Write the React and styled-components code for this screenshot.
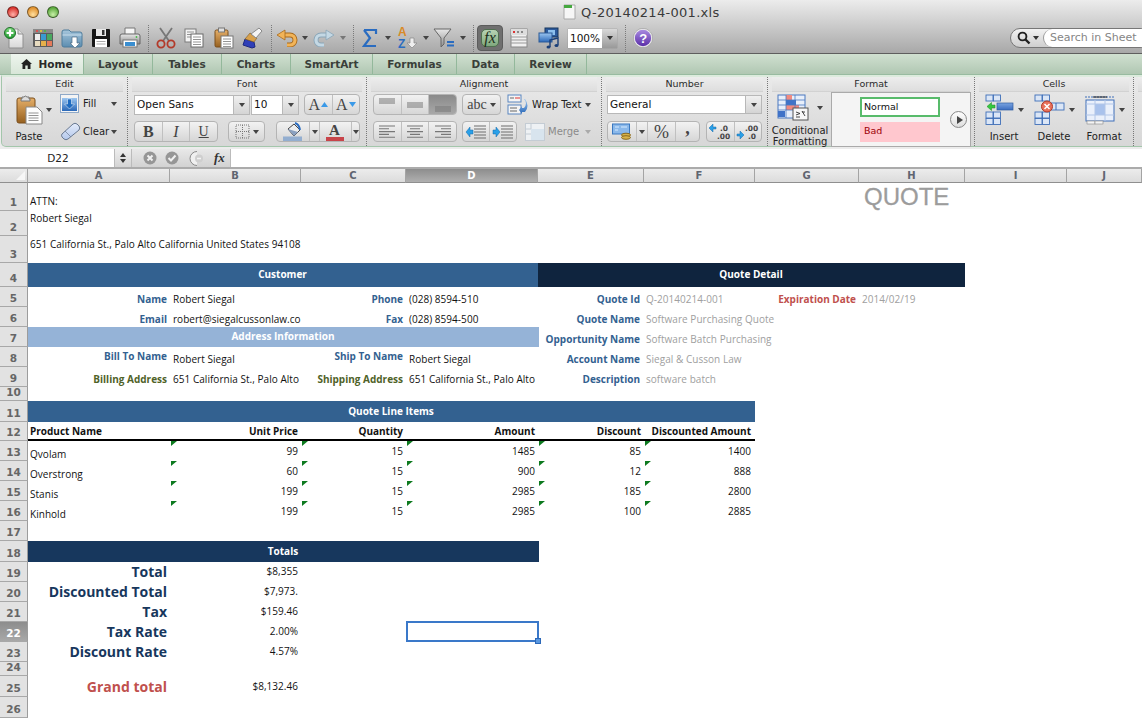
import React from "react";
import styled, { createGlobalStyle, css } from "styled-components";

const Global = createGlobalStyle`
  html, body { margin: 0; padding: 0; background: #fff; }
  body { font-family: "DejaVu Sans", sans-serif; }
`;
const ui = `"DejaVu Sans", "Liberation Sans", sans-serif`;
const sheet = `"Open Sans", "Noto Sans", sans-serif`;

const Window = styled.div`width:1142px;height:718px;overflow:hidden;display:flex;flex-direction:column;background:#fff;`;
const Chrome = styled.div`background:linear-gradient(#ececec,#a8a8a8);border-bottom:1px solid #5e5e5e;height:53px;display:flex;flex-direction:column;flex:none;`;
const TitleBar = styled.div`height:24px;display:flex;align-items:center;padding-left:3px;flex:none;`;
const Light = styled.span`width:12px;height:12px;border-radius:50%;margin:0 4px;border:.5px solid rgba(0,0,0,.45);box-sizing:border-box;
  background:radial-gradient(circle at 50% 75%,${p=>p.$a} 0%,${p=>p.$b} 75%);`;
const Title = styled.div`margin-left:500px;display:flex;align-items:center;gap:5px;font:13px ${ui};letter-spacing:.3px;color:#3a3a3a;`;
const Toolbar = styled.div`display:flex;align-items:center;height:29px;padding-bottom:1px;box-sizing:border-box;`;
const Slot = styled.div`width:${p=>p.$w}px;flex:none;display:flex;justify-content:center;align-items:center;box-sizing:border-box;
  ${p=>p.$end&&"justify-content:flex-end;padding-right:3px;"}`;
const Sep = styled.div`width:8px;height:27px;flex:none;display:flex;justify-content:center;&::after{content:"";border-left:1px dotted #7a7a7a;}`;
const Caret = styled.span`width:0;height:0;border-left:${p=>p.$s||3}px solid transparent;border-right:${p=>p.$s||3}px solid transparent;border-top:${p=>(p.$s||3)+1}px solid ${p=>p.$c||"#444"};display:inline-block;flex:none;`;
const FxBtn = styled.div`width:26px;height:26px;box-sizing:border-box;border-radius:4px;background:#6f6f6f;padding:3px;border:1px solid #5c5c5c;flex:none;display:flex;`;
const FxIn = styled.div`flex:1;border-radius:5px;background:linear-gradient(#b7d3b4,#7fa87d);border:1px solid #4f6f4f;font:italic 16px "Liberation Serif",serif;color:#1c2f1c;display:flex;align-items:center;justify-content:center;`;
const ZoomBox = styled.div`width:49px;height:19px;margin-left:4px;display:flex;flex:none;background:#fff;box-shadow:0 0 1px #777;`;
const ZoomText = styled.div`flex:1;font:10.5px/19px ${ui};color:#111;padding-left:2px;`;
const ZoomDrop = styled.div`width:15px;background:linear-gradient(#d8d8d8,#999);display:flex;align-items:center;justify-content:center;`;
const SearchPill = styled.div`margin-left:auto;width:140px;margin-right:-8px;height:20px;flex:none;box-sizing:border-box;border:1px solid #777;border-radius:10px;background:linear-gradient(#f2f2f2,#cfcfcf);display:flex;align-items:center;padding-left:6px;gap:2px;`;
const SearchField = styled.div`margin-left:2px;flex:1;height:18px;background:#fff;border-radius:9px 0 0 9px;border-left:1px solid #999;font:11px/18px ${ui};color:#858585;padding-left:6px;white-space:nowrap;`;

const Tabs = styled.div`height:20px;flex:none;display:flex;padding-left:11px;background:linear-gradient(#d0e0d0,#b0c7b2);border-bottom:1px solid #98bba0;box-sizing:content-box;`;
const Tab = styled.div`width:${p=>p.$w}px;flex:none;box-sizing:border-box;display:flex;align-items:center;justify-content:center;gap:6px;
  font:bold 10.5px ${ui};color:#3a3f3a;border-right:1px solid #93b89b;
  ${p=>p.$active&&css`background:linear-gradient(#eef5ee,#d8e6d8);color:#2a2a2a;`}`;

const RibbonWrap = styled.div`height:74px;flex:none;background:#ececec;`;
const Ribbon = styled.div`height:72px;display:flex;box-sizing:border-box;background:linear-gradient(#eaeaea,#d7d7d7);border:1px solid #a3c6ab;border-top:2px solid #dcebdd;border-radius:0 0 5px 5px;margin:0 0 0 1px;width:1160px;`;
const Group = styled.div`width:${p=>p.$w}px;flex:none;box-sizing:border-box;display:flex;flex-direction:column;${p=>p.$last?"":"border-right:1px dotted #777;"}`;
const GroupHead = styled.div`height:14px;flex:none;margin:0 4px;border-bottom:1px solid #d2d2d2;background:linear-gradient(#ededed,#dedede);font:9.5px/14px ${ui};color:#2b2b2b;text-align:center;`;
const GroupBody = styled.div`flex:1;display:flex;padding:2px 0 0 ${p=>p.$pl||0}px;gap:${p=>p.$gap||0}px;min-height:0;`;
const Stack = styled.div`display:flex;flex-direction:column;gap:${p=>p.$gap??6}px;margin-top:${p=>p.$mt||0}px;`;
const Row = styled.div`display:flex;align-items:center;height:${p=>p.$h||21}px;gap:${p=>p.$gap||0}px;`;
const Seg = styled.div`display:flex;height:${p=>p.$h||21}px;width:${p=>p.$w}px;flex:none;margin-left:${p=>p.$ml||0}px;box-sizing:border-box;border:1px solid #b4b4b4;border-radius:4px;overflow:hidden;background:linear-gradient(#f2f2f2,#d6d6d6);`;
const SegBtn = styled.div`flex:${p=>p.$w?`0 0 ${p.$w}px`:"1"};display:flex;align-items:center;justify-content:center;border-right:1px solid #c0c0c0;gap:3px;
  &:last-child{border-right:0}
  ${p=>p.$on&&css`background:linear-gradient(#8a8a8a,#a8a8a8);`}`;
const Glyph = styled.span`font:${p=>p.$i?"italic ":""}${p=>p.$b?"bold ":""}${p=>p.$s||15}px/${p=>p.$lh||"1"} "Liberation Serif",serif;color:#444;${p=>p.$u&&"text-decoration:underline;"}${p=>p.$lift&&`transform:translateY(-${p.$lift}px);`}`;
const Combo = styled.div`display:flex;height:${p=>p.$h||20}px;width:${p=>p.$w}px;margin-left:${p=>p.$ml||0}px;flex:none;box-sizing:border-box;border:1px solid #b8b8b8;background:#fff;`;
const ComboText = styled.div`flex:1;font:10.5px/16px ${ui};color:#111;padding-left:2px;`;
const ComboDrop = styled.div`width:15px;background:linear-gradient(#f0f0f0,#d4d4d4);border-left:1px solid #b8b8b8;display:flex;align-items:center;justify-content:center;`;
const Label = styled.div`font:${p=>p.$s||10}px ${ui};color:${p=>p.$c||"#222"};white-space:nowrap;margin-right:${p=>p.$mr||0}px;${p=>p.$center&&"text-align:center;line-height:11px;"}`;
const PasteCol = styled.div`width:52px;margin-left:6px;display:flex;flex-direction:column;align-items:center;gap:6px;`;
const IconCaret = styled.div`display:flex;align-items:center;gap:3px;`;
const EditRow = styled.div`display:flex;align-items:center;width:57px;height:21px;`;
const EditIcon = styled.div`width:23px;display:flex;flex:none;`;
const Push = styled.div`margin-left:auto;display:flex;`;
const Gallery = styled.div`width:140px;height:55px;margin:-2px 0 0 6px;flex:none;box-sizing:border-box;border:1px solid #aaa;background:#f4f4f4;display:flex;align-items:center;padding-left:28px;gap:10px;`;
const StyleBox = styled.div`width:80px;height:20px;box-sizing:border-box;font:9.5px/16px ${ui};padding-left:2px;
  ${p=>p.$kind==="normal"?css`background:#fff;border:2px solid #58bb6b;color:#111;`:css`background:#ffc7ce;color:#9c0006;line-height:18px;padding-left:4px;`}`;
const Round = styled.div`width:15px;height:15px;border-radius:50%;border:1px solid #888;background:linear-gradient(#fff,#ddd);display:flex;align-items:center;justify-content:center;`;
const RightTri = styled.span`width:0;height:0;border-top:4px solid transparent;border-bottom:4px solid transparent;border-left:6px solid #444;margin-left:2px;`;
const CellCol = styled.div`width:50px;flex:none;display:flex;flex-direction:column;align-items:center;gap:${p=>p.$gap??6}px;`;

const FormulaBar = styled.div`height:18px;flex:none;display:flex;border-bottom:2px solid #ababab;background:#fff;`;
const NameBox = styled.div`width:114px;font:10.5px/18px ${ui};color:#222;text-align:center;box-sizing:border-box;padding-left:2px;`;
const Stepper = styled.div`width:18px;box-sizing:border-box;background:linear-gradient(#eee,#d4d4d4);border-left:1px solid #bbb;border-right:1px solid #bbb;display:flex;flex-direction:column;align-items:center;justify-content:center;gap:2px;`;
const Up = styled.span`width:0;height:0;border-left:3px solid transparent;border-right:3px solid transparent;border-bottom:4px solid #333;`;
const FxArea = styled.div`width:99px;box-sizing:border-box;background:linear-gradient(#e8e8e8,#d2d2d2);border-right:1px solid #bbb;display:flex;align-items:center;padding-left:11px;gap:8px;`;
const PlusWrap = styled.div`margin-left:2px;display:flex;`;
const FxMark = styled.span`font:italic bold 13px "Liberation Serif",serif;color:#333;margin-left:-1px;`;

const Grid = styled.div`display:grid;margin-top:0;flex:none;
  grid-template-columns:28px 142px 131px 105px 132px 106px 111px 104px 106px 102px 75px;
  grid-template-rows:14px 28px 25px 27px 24px 20px 20px 20px 20px 20px 14px 21px 19px 20px 20px 20px 20px 20px 21px 20px 20px 20px 20px 20px 14px 21px 21px;`;
const ColHead = styled.div`grid-row:1;grid-column:${p=>p.$c};box-sizing:border-box;border-right:1px solid #a4a4a4;border-bottom:1px solid #8f8f8f;
  background:${p=>p.$on?"linear-gradient(#8d8d8d,#b0b0b0)":"linear-gradient(#ececec,#dcdcdc)"};
  font:bold 10px/13px ${ui};color:${p=>p.$on?"#fff":"#5f6570"};text-align:center;position:relative;`;
const Corner = styled.span`position:absolute;right:2px;bottom:2px;width:0;height:0;border-left:9px solid transparent;border-bottom:9px solid #f7f7f7;`;
const RowHead = styled.div`grid-column:1;grid-row:${p=>p.$r+1};box-sizing:border-box;border-right:1px solid #9c9c9c;border-bottom:1px solid #a8a8a8;
  background:${p=>p.$on?"linear-gradient(#8d8d8d,#a8a8a8)":"#e2e2e2"};color:${p=>p.$on?"#fff":"#666"};
  font:bold 10.5px/14px ${ui};display:flex;align-items:flex-end;justify-content:center;padding-bottom:1px;`;
const Cell = styled.div`grid-column:${p=>p.$c+2} / span ${p=>p.$span||1};grid-row:${p=>p.$r+1};box-sizing:border-box;min-width:0;white-space:nowrap;
  padding-top:${p=>p.$pt||0}px;padding-left:${p=>p.$pl??2}px;padding-right:${p=>p.$pr??3}px;
  font:${p=>p.$b?700:400} ${p=>p.$s||10}px/14px ${sheet};color:${p=>p.$color||"#111"};
  background:${p=>p.$bg||"transparent"};text-align:${p=>p.$t||"left"};
  ${p=>!p.$b&&"letter-spacing:.035px;"}
  ${p=>p.$ext&&"margin-right:-1px;"}
  ${p=>p.$rule&&"border-bottom:2px solid #000;"}`;
const Quote = styled.div`grid-column:9;grid-row:2;font:400 24px/28px "Liberation Sans",sans-serif;color:#9c9c9c;padding-left:5px;-webkit-text-stroke:.3px #9c9c9c;`;
const Flag = styled.i`grid-column:${p=>p.$c+2};grid-row:${p=>p.$r+1};width:0;height:0;border-top:5px solid #0d7a1f;border-right:6px solid transparent;margin-left:1px;pointer-events:none;`;
const Selection = styled.div`grid-column:5;grid-row:23;box-sizing:border-box;border:2px solid #3a78c9;position:relative;margin:-1px -1px 0 0;`;
const Handle = styled.span`position:absolute;right:-4px;bottom:-4px;width:6px;height:6px;background:#5a98e0;border:1px solid #2c68b8;box-sizing:border-box;`;
const HiddenDefs = styled.svg`display:block;width:0;height:0;flex:none;`;

const Defs = () => (
  <HiddenDefs aria-hidden="true"><defs>
    {[["gBlue","#9cc6f0","#2a68b8"],["gGreen","#7fdc7f","#1f9a2f"],["gBrown","#e6b06a","#96601f"],["gPaper","#ffffff","#d8d8d8"],["gGrey","#e8e8e8","#8e8e8e"],
      ["gPurple","#a98be0","#5a2ea8"],["gFolder","#a6c6dc","#5c8db0"],["gOrange","#f6c878","#d98a28"],["gPale","#cfe0ea","#8fb0c4"],["gDark","#666","#222"],["gCell","#e4ecfa","#b4c8ec"],["gTile","#7aa4e0","#3a6cc0"]].map(([id,a,b])=>(
      <linearGradient id={id} key={id} x1="0" y1="0" x2="0" y2="1"><stop offset="0" stopColor={a}/><stop offset="1" stopColor={b}/></linearGradient>
    ))}
  </defs></HiddenDefs>
);
const S = ({w=24,h=24,children}) => <svg width={w} height={h} viewBox={`0 0 ${w} ${h}`} style={{display:"block",flex:"none"}}>{children}</svg>;
const DocLines = ({x,y,n=4,w=7,c="#888"}) => <>{Array.from({length:n},(_,i)=><line key={i} x1={x} x2={x+w} y1={y+i*2.5} y2={y+i*2.5} stroke={c} strokeWidth=".9"/>)}</>;

const INew = () => <S><path d="M7 3h9l5 5v14H7z" fill="url(#gPaper)" stroke="#8f8f8f"/><path d="M16 3v5h5" fill="#ddd" stroke="#8f8f8f"/><circle cx="8" cy="7" r="5.5" fill="url(#gGreen)" stroke="#1e6d28"/><path d="M8 3.6v6.8M4.6 7h6.8" stroke="#fff" strokeWidth="2.2"/></S>;
const IGallery = () => <S w={22} h={20}><rect x="1" y="1" width="20" height="18" fill="#5c5c5c" rx="1"/><rect x="1" y="1" width="20" height="4" fill="#8a8a8a"/><circle cx="5" cy="3" r="1.1" fill="#e44"/><circle cx="9" cy="3" r="1.1" fill="#ec3"/><circle cx="13" cy="3" r="1.1" fill="#4b4"/><rect x="3" y="6" width="5" height="6" fill="#eee"/><rect x="9" y="6" width="5" height="6" fill="#3a9ad0"/><rect x="15" y="6" width="5" height="6" fill="#49a860"/><rect x="3" y="13" width="5" height="5" fill="#e8dcc0"/><rect x="9" y="13" width="5" height="5" fill="#e6b04a"/><rect x="15" y="13" width="5" height="5" fill="#e47a5a"/></S>;
const IOpen = () => <S w={22} h={22}><path d="M1 5q0-2 2-2h5l2 2h9q2 0 2 2v11q0 2-2 2H3q-2 0-2-2z" fill="url(#gFolder)" stroke="#4e7c9c"/><path d="M1.5 8h19" stroke="#c8dcea"/><path d="M11 10h5v6h3l-5 5-5-5h2z" fill="#fff" stroke="#4e6c84" strokeWidth=".7"/></S>;
const ISave = () => <S w={20} h={20}><path d="M1 2q0-1 1-1h16q1 0 1 1v16q0 1-1 1H2q-1 0-1-1z" fill="#161616"/><rect x="5" y="1" width="10" height="7" fill="#e8e8e8"/><rect x="11" y="2" width="2.5" height="5" fill="#333"/><rect x="4" y="11" width="12" height="8" fill="#fff"/><path d="M5.5 13.5h9M5.5 16h9" stroke="#aaa"/></S>;
const IPrint = () => <S w={22} h={22}><path d="M6 1h10v7H6z" fill="#f6f6f6" stroke="#777"/><path d="M3 7h16q2 0 2 2v8H1V9q0-2 2-2z" fill="url(#gGrey)" stroke="#666"/><rect x="4" y="13" width="14" height="7" fill="#fff" stroke="#777"/><rect x="6" y="15" width="10" height="4" fill="#3a8ed0"/><circle cx="17.5" cy="10" r=".9" fill="#4b4"/></S>;
const ICut = () => <S w={20} h={22}><path d="M4 1l9 13M16 1L7 14" stroke="#777" strokeWidth="1.8" fill="none"/><circle cx="5" cy="17" r="3.6" fill="none" stroke="#b33a2a" strokeWidth="1.8"/><circle cx="15" cy="17" r="3.6" fill="none" stroke="#b33a2a" strokeWidth="1.8"/></S>;
const ICopy = () => <S w={20} h={20}><rect x="1" y="1" width="11" height="13" fill="#f4f4f4" stroke="#7a7a7a"/><DocLines x={3} y={4} n={3}/><rect x="7" y="6" width="12" height="13" fill="#fff" stroke="#6a6a6a"/><DocLines x={9} y={9} n={4} w={8}/></S>;
const IPaste = ({big}) => big ? <S w={27} h={31}><rect x="1" y="4" width="18" height="25" rx="2" fill="url(#gBrown)" stroke="#7a4e1c"/><path d="M6 5V3h2q1-2 3 0h2v2h1v2H5V5z" fill="#ddd" stroke="#777"/><path d="M10 13h11l5 5v12H10z" fill="#fdfdfd" stroke="#888"/><DocLines x={12.5} y={19} n={4} w={10}/></S>
  : <S w={20} h={22}><rect x="1" y="3" width="13" height="17" rx="1.5" fill="url(#gBrown)" stroke="#7a4e1c"/><rect x="4.5" y="1" width="6" height="4" fill="#e0e0e0" stroke="#777"/><rect x="7" y="9" width="12" height="12" fill="#fff" stroke="#777"/><DocLines x={9} y={12} n={4} w={8}/></S>;
const IBrush = () => <S w={22} h={22}><path d="M3 12l9 3 1 5-3 1-9-3z" fill="#2f3fb8" stroke="#1d2980"/><path d="M3 12l5-6 7 5-3 4z" fill="#d8a04a" stroke="#7a5a2a" strokeWidth=".6"/><path d="M9 7l8-6 3 3-6 7z" fill="#f4f4f4" stroke="#888"/></S>;
const CurvedArrow = ({outer,inner,head}) => <S w={22} h={18}>
  <path d="M8 6h6a5 5 0 0 1 0 10h-3" fill="none" stroke={outer} strokeWidth="5"/>
  <path d="M8 6h6a5 5 0 0 1 0 10h-3" fill="none" stroke={inner} strokeWidth="3.2"/>
  <path d="M1 6l8-5v10z" fill={head} stroke={outer} strokeWidth=".8"/>
</S>;
const IUndo = () => <CurvedArrow outer="#a86a1c" inner="#f2b458" head="#f2b458"/>;
const Mirror = styled.div`transform:scaleX(-1);display:flex;`;
const IRedo = () => <Mirror><CurvedArrow outer="#8aa6b8" inner="#c4d8e4" head="#c4d8e4"/></Mirror>;
const ISigma = () => <S w={16} h={20}><path d="M2 2h12v4M14 18H2l6-8-6-8" fill="none" stroke="#2a6cc0" strokeWidth="2.2"/></S>;
const SvgText = styled.text`font:bold ${p=>p.$s}px "Liberation Sans",sans-serif;`;
const ISort = () => <S w={21} h={24}><SvgText x="1" y="10" $s={12} fill="#d98a28">A</SvgText><SvgText x="1" y="22" $s={12} fill="#2a6cc0">Z</SvgText><path d="M12 12h4v5h3l-5 5-5-5h3z" transform="translate(1 0)" fill="#eee" stroke="#888" strokeWidth=".7"/></S>;
const IFilter = () => <S w={22} h={22}><path d="M1 2h17l-7 9v6l-3 3v-9z" fill="url(#gGrey)" stroke="#666"/><path d="M14 15h7M14 18.5h7" stroke="#2a6cc0" strokeWidth="1.8"/></S>;
const ITable = () => <S w={18} h={20}><rect x="1" y="1" width="16" height="18" fill="#f0f0f0" stroke="#888"/><rect x="1" y="1" width="16" height="6" fill="#ddd"/><rect x="3" y="3" width="2" height="2" fill="#d33"/><rect x="7" y="3" width="2" height="2" fill="#888"/><rect x="11" y="3" width="2" height="2" fill="#888"/><path d="M1 9h16M1 12h16M1 15h16" stroke="#999"/></S>;
const IMedia = () => <S w={22} h={22}><rect x="7" y="1" width="13" height="9" fill="#2c5a9c" stroke="#16365e"/><rect x="10" y="3" width="7" height="5" fill="#8cc0ee"/><rect x="1" y="6" width="13" height="9" fill="url(#gBlue)" stroke="#2a5a98"/><path d="M12 20v-7l8-2v7" fill="none" stroke="#1a3f78" strokeWidth="1.4"/><ellipse cx="10.5" cy="20" rx="2" ry="1.6" fill="#1a3f78"/><ellipse cx="18.5" cy="18.5" rx="2" ry="1.6" fill="#1a3f78"/></S>;
const IHelp = () => <S w={20} h={20}><circle cx="10" cy="10" r="9.6" fill="#eee" stroke="#999" strokeWidth=".6"/><circle cx="10" cy="10" r="8.2" fill="url(#gPurple)"/><SvgText x="6.3" y="14.6" $s={13} fill="#fff">?</SvgText></S>;
const ISearch = () => <S w={14} h={14}><circle cx="5.5" cy="5.5" r="3.9" fill="none" stroke="#222" strokeWidth="1.9"/><path d="M8.5 8.5l4 4" stroke="#222" strokeWidth="2.4"/></S>;
const IFileTitle = () => <S w={13} h={16}><path d="M1 1h11v14H1z" fill="#f6f6f6" stroke="#aaa"/><rect x="1" y="1" width="8" height="3" fill="#45a83f"/></S>;
const IFill = () => <S w={19} h={19}><rect x=".5" y=".5" width="18" height="18" fill="#f4f4f4" stroke="#8fa9c8"/><rect x="2" y="4" width="15" height="13" fill="url(#gBlue)"/><path d="M7.5 5h4v5h3l-5 5-5-5h3z" fill="#1e6bc0" stroke="#fff" strokeWidth=".5"/></S>;
const IEraser = () => <S w={21} h={19}><path d="M2 12L13 2q2-1.500 4 0l2 2q1.500 2 0 4L8 17q-2 1.500-4 0l-2-2q-1-2 0-3z" fill="url(#gCell)" stroke="#6a7a92"/><path d="M5 9l6 6" stroke="#6a7a92" strokeWidth=".7"/></S>;
const ABtn = ({c,down}) => <><Glyph $s={16}>A</Glyph><svg width="7" height="5" viewBox="0 0 7 5" style={{display:"block",marginLeft:-2}}><path d={down?"M0 0h7L3.500 5z":"M0 5h7L3.500 0z"} fill={c}/></svg></>;
const IBorders = () => <S w={15} h={15}><rect x="1" y="1" width="13" height="13" fill="none" stroke="#777" strokeDasharray="1 1"/><path d="M7.500 1v13M1 7.500h13" stroke="#777" strokeDasharray="1 1"/></S>;
const IBucket = () => <S w={22} h={19}><path d="M6 7l6-5 6 6-6 6z" fill="#eee" stroke="#444"/><path d="M6 7l6 7 4-4z" fill="#8aa0c0"/><path d="M13 1q4 1 5 7" stroke="#2a6cc0" strokeWidth="2" fill="none"/><rect x="1" y="14.500" width="19" height="4.500" fill="#93aed0"/></S>;
const IFontA = () => <S w={19} h={19}><SvgText x="3" y="13" $s={15} fill="#444" style={{fontFamily:"Liberation Serif"}}>A</SvgText><rect x="0" y="15" width="18" height="4" fill="#c8444a"/></S>;
const Lines = ({rows}) => <S w={18} h={14}>{rows.map(([a,b,y],i)=><line key={i} x1={a} x2={b} y1={y} y2={y} stroke="#777" strokeWidth="1.1"/>)}</S>;
const IWrap = () => <S w={22} h={22}><rect x="1" y="1" width="13" height="7" fill="#f4f4f4" stroke="#5a86c0"/><path d="M3 4h4" stroke="#666"/><path d="M8 4h5" stroke="#d33"/><rect x="1" y="11" width="13" height="9" fill="#f4f4f4" stroke="#5a86c0"/><path d="M3 14h7M3 17h7" stroke="#666"/><path d="M17 5q4 4 0 9h-2v-2l-3 4 3 4v-2h3q5-6 0-13z" fill="url(#gBlue)"/></S>;
const IMerge = () => <S w={20} h={18}><rect x=".5" y=".5" width="19" height="17" fill="#eef1f4" stroke="#c4ccd4"/><rect x="6" y="6" width="13" height="11" fill="#d8e4ee"/><path d="M6 .5v5.500H.5M.5 11H6" stroke="#c4ccd4" fill="none"/></S>;
const IIndent = ({right}) => <S w={22} h={14}><path d="M9 1h12M9 4h12M9 7h12M9 10h12M9 13h12" stroke="#6f6f6f" strokeWidth="1.1"/>{right?<path d="M1 5h3V2l4 5-4 5V9H1z" fill="#2aa0e8" stroke="#1468a8" strokeWidth=".5"/>:<path d="M8 5H5V2L1 7l4 5V9h3z" fill="#2aa0e8" stroke="#1468a8" strokeWidth=".5"/>}</S>;
const IMoney = () => <S w={20} h={18}><rect x=".5" y="1" width="17" height="10" fill="#8ab8ea" stroke="#3a78c0"/><path d="M3 4h4M9 4h6M3 7h3" stroke="#d8ecff"/><ellipse cx="14" cy="12" rx="4.500" ry="1.800" fill="#d8b24a" stroke="#8a6a1e"/><ellipse cx="14" cy="14.500" rx="4.500" ry="1.800" fill="#d8b24a" stroke="#8a6a1e"/></S>;
const DecText = styled.text`font:bold 7.5px ${ui};fill:#444;`;
const IDec = ({more}) => <S w={24} h={16}>{more?<><DecText x="9" y="7">.00</DecText><DecText x="12" y="15">.0</DecText><path d="M1 10h3V7l4 4-4 4v-3H1z" fill="#2aa0e8" stroke="#1468a8" strokeWidth=".5"/></>:<><DecText x="12" y="7">.0</DecText><DecText x="9" y="15">.00</DecText><path d="M8 3H5V0L1 4l4 4V5h3z" fill="#2aa0e8" stroke="#1468a8" strokeWidth=".5"/></>}</S>;
const ICond = () => <S w={37} h={27}><rect x="1" y="1" width="27" height="23" fill="#e8effa" stroke="#4a78c0"/>
  <rect x="9" y="1" width="6" height="5" fill="#f08a80"/><rect x="9" y="6" width="10" height="5" fill="#3f72c8"/><rect x="9" y="11" width="13" height="5" fill="#f08a80"/><rect x="1" y="17" width="7" height="6" fill="#3f72c8"/><path d="M1 6h27M1 11h27M1 16h27M9 1v23M18 1v23" stroke="#4a78c0" strokeWidth=".8"/>
  <rect x="16" y="14" width="15" height="12" fill="#f8f8f8" stroke="#555"/><path d="M19 18l4 1.500-4 1.500M19 23h4M25 17l3 5M28 18h-3" stroke="#333" fill="none" strokeWidth=".9"/></S>;
const Blocks = ({n,y,x}) => <>{Array.from({length:n},(_,i)=><rect key={i} x={x+i*7.500} y={y} width="7" height="6" fill="#dbe6f6" stroke="#3f6fb8" strokeWidth=".9"/>)}</>;
const IInsert = () => <S w={30} h={31}><Blocks n={2} x={1} y={1}/><Blocks n={2} x={1} y={18}/><Blocks n={2} x={1} y={24.500}/><rect x="12" y="9" width="16" height="7" fill="url(#gTile)" stroke="#2f5ca0" strokeWidth=".7"/><path d="M10 11H6.500V8.500L2 12.500l4.500 4V14H10z" fill="#35c83f" stroke="#1d8a25" strokeWidth=".5"/></S>;
const IDelete = () => <S w={32} h={31}><Blocks n={2} x={1} y={1}/><Blocks n={2} x={1} y={18}/><Blocks n={2} x={1} y={24.500}/><rect x="14" y="9" width="16" height="7" fill="#dbe6f6" stroke="#3f6fb8" strokeWidth=".9"/><path d="M22 9v7" stroke="#3f6fb8"/><circle cx="13" cy="12.500" r="5.500" fill="#e8705a" stroke="#b03a2a"/><path d="M10.500 10l5 5M15.500 10l-5 5" stroke="#fff" strokeWidth="1.500"/></S>;
const IFormatCells = () => <S w={32} h={31}><path d="M1 3h30" stroke="#3f6fb8" strokeDasharray="2 1"/><path d="M9 3h14" stroke="#222"/><rect x="2" y="6" width="28" height="21" fill="#eaf0fb" stroke="#3f6fb8"/><rect x="11" y="10" width="10" height="11" fill="#a9c2ec"/><path d="M2 10h28M2 21h28M11 6v21M21 6v21" stroke="#b2c6e8"/><rect x="3" y="27" width="8" height="3" fill="#f4f4f4" stroke="#888" strokeWidth=".6"/><rect x="11" y="27" width="8" height="3" fill="#f4f4f4" stroke="#888" strokeWidth=".6"/></S>;
const IBadgeX = () => <S w={14} h={14}><circle cx="7" cy="7" r="6.500" fill="#969696"/><path d="M4.500 4.500l5 5M9.500 4.500l-5 5" stroke="#f0f0f0" strokeWidth="2"/></S>;
const IBadgeOk = () => <S w={14} h={14}><circle cx="7" cy="7" r="6.500" fill="#969696"/><path d="M3.500 7l2.500 2.500L10.500 4.500" stroke="#f0f0f0" strokeWidth="2" fill="none"/></S>;
const IBadgePlus = () => <S w={18} h={15}><path d="M8 .5A7 7 0 0 0 8 14.500" fill="#f0f0f0" stroke="#888"/><circle cx="10" cy="7.500" r="4" fill="#cfcfcf"/><path d="M8 7.500h4" stroke="#f4f4f4" strokeWidth="1.500"/></S>;

const toolbarItems = [
  [28,<INew/>],[29,<IGallery/>],[29,<IOpen/>],[29,<ISave/>],[29,<IPrint/>],"sep",
  [27,<ICut/>],[30,<ICopy/>],[30,<IPaste/>],[28,<IBrush/>],"sep",
  [24,<IUndo/>],[12,<Caret/>],[26,<IRedo/>],[12,<Caret $c="#777"/>],"sep",
  [26,<ISigma/>],[10,<Caret/>],[28,<ISort/>],[10,<Caret/>],[26,<IFilter/>],[12,<Caret/>],"sep",
];

const vRows = o => { const y0 = o==="top"?1:o==="mid"?5:9; return [0,1,2].map(i=>[1,17,y0+i*2]); };
const hRows = o => [16,10,16,10,16].map((w,i)=>{ const y=1+i*2.8; return o==="l"?[1,1+w,y]:o==="c"?[9-w/2,9+w/2,y]:[17-w,17,y]; });

const columns = [["A",142],["B",131],["C",105],["D",132],["E",106],["F",111],["G",104],["H",106],["I",102],["J",75]];
const rows = Array.from({length:26},(_,i)=>i+1);

const BLUE="#336190", OLIVE="#4f6228", GREY="#a0a0a0", RED="#c0504d", NAVY="#17375d";
const A=0,B=1,C=2,D=3,E=4,F=5,G=6,Hc=7;

const lineItems = [
  ["Qvolam",99,15,1485,85,1400],["Overstrong",60,15,900,12,888],["Stanis",199,15,2985,185,2800],["Kinhold",199,15,2985,100,2885],
];
const totals = [[19,"Total","$8,355"],[20,"Discounted Total","$7,973."],[21,"Tax","$159.46"],[22,"Tax Rate","2.00%"],[23,"Discount Rate","4.57%"]];
const partyRows = [
  [5,"Name","Robert Siegal","Phone","(028) 8594-510"],
  [6,"Email","robert@siegalcussonlaw.co","Fax","(028) 8594-500"],
];
const quoteRows = [[5,"Quote Id","Q-20140214-001"],[6,"Quote Name","Software Purchasing Quote"],[7,"Opportunity Name","Software Batch Purchasing"],[8,"Account Name","Siegal & Cusson Law"],[9,"Description","software batch"]];

export default function App() {
  return (
    <Window>
      <Global/>
      <Defs/>
      <Chrome>
        <TitleBar>
          <Light $a="#ffb0a8" $b="#d8322c"/><Light $a="#ffe0a0" $b="#e0902c"/><Light $a="#c8f0a8" $b="#5aa83c"/>
          <Title><IFileTitle/>Q-20140214-001.xls</Title>
        </TitleBar>
        <Toolbar>
          {toolbarItems.map((it,i)=> it==="sep" ? <Sep key={i}/> : <Slot key={i} $w={it[0]}>{it[1]}</Slot>)}
          <FxBtn><FxIn>fx</FxIn></FxBtn>
          <Slot $w={31}><ITable/></Slot>
          <Slot $w={30}><IMedia/></Slot>
          <ZoomBox><ZoomText>100%</ZoomText><ZoomDrop><Caret $c="#333"/></ZoomDrop></ZoomBox>
          <Slot $w={16}><Sep/></Slot>
          <Slot $w={20}><IHelp/></Slot>
          <SearchPill><ISearch/><Caret $c="#333"/><SearchField>Search in Sheet</SearchField></SearchPill>
        </Toolbar>
      </Chrome>
      <Tabs>
        <Tab $w={73} $active><svg width="11" height="10" viewBox="0 0 11 10"><path d="M5.500 0L11 5H9.500v5H6.700V6.500H4.300V10H1.500V5H0z" fill="#222"/></svg>Home</Tab>
        {[["Layout",69],["Tables",69],["Charts",69],["SmartArt",82],["Formulas",84],["Data",58],["Review",72]].map(([t,w])=><Tab key={t} $w={w}>{t}</Tab>)}
      </Tabs>
      <RibbonWrap>
      <Ribbon>
        <Group $w={126}>
          <GroupHead>Edit</GroupHead>
          <GroupBody>
            <PasteCol>
              <IconCaret><IPaste big/><Caret/></IconCaret>
              <Label $mr={10}>Paste</Label>
            </PasteCol>
            <Stack $gap={7} $mt={-1}>
              <EditRow><EditIcon><IFill/></EditIcon><Label>Fill</Label><Push><Caret/></Push></EditRow>
              <EditRow><EditIcon><IEraser/></EditIcon><Label>Clear</Label><Push><Caret/></Push></EditRow>
            </Stack>
          </GroupBody>
        </Group>
        <Group $w={239}>
          <GroupHead>Font</GroupHead>
          <GroupBody $pl={6}>
            <Stack>
              <Row>
                <Combo $w={116}><ComboText>Open Sans</ComboText><ComboDrop><Caret/></ComboDrop></Combo>
                <Combo $w={48} $ml={1}><ComboText>10</ComboText><ComboDrop><Caret/></ComboDrop></Combo>
                <Seg $w={56} $ml={5}><SegBtn><ABtn c="#3a9ae8"/></SegBtn><SegBtn><ABtn c="#3a9ae8" down/></SegBtn></Seg>
              </Row>
              <Row>
                <Seg $w={84}><SegBtn><Glyph $b $s={16}>B</Glyph></SegBtn><SegBtn><Glyph $i $s={16}>I</Glyph></SegBtn><SegBtn><Glyph $u $s={14}>U</Glyph></SegBtn></Seg>
                <Seg $w={37} $ml={10}><SegBtn><IBorders/><Caret/></SegBtn></Seg>
                <Seg $w={84} $ml={11}><SegBtn $w={32}><IBucket/></SegBtn><SegBtn $w={9}><Caret/></SegBtn><SegBtn $w={31}><IFontA/></SegBtn><SegBtn><Caret/></SegBtn></Seg>
              </Row>
            </Stack>
          </GroupBody>
        </Group>
        <Group $w={235}>
          <GroupHead>Alignment</GroupHead>
          <GroupBody $pl={6}>
            <Stack>
              <Row>
                <Seg $w={84}><SegBtn><Lines rows={vRows("top")}/></SegBtn><SegBtn><Lines rows={vRows("mid")}/></SegBtn><SegBtn $on><Lines rows={vRows("bot")}/></SegBtn></Seg>
                <Seg $w={39} $ml={5}><SegBtn><Glyph $s={14}>abc</Glyph><Caret/></SegBtn></Seg>
                <Slot $w={31} $end><IWrap/></Slot>
                <Label>Wrap Text</Label><Slot $w={14}><Caret/></Slot>
              </Row>
              <Row>
                <Seg $w={84}><SegBtn><Lines rows={hRows("l")}/></SegBtn><SegBtn><Lines rows={hRows("c")}/></SegBtn><SegBtn><Lines rows={hRows("r")}/></SegBtn></Seg>
                <Seg $w={55} $ml={5}><SegBtn><IIndent/></SegBtn><SegBtn><IIndent right/></SegBtn></Seg>
                <Slot $w={31} $end><IMerge/></Slot>
                <Label $c="#8a8a8a">Merge</Label><Slot $w={18}><Caret $c="#aaa"/></Slot>
              </Row>
            </Stack>
          </GroupBody>
        </Group>
        <Group $w={166}>
          <GroupHead>Number</GroupHead>
          <GroupBody $pl={5}>
            <Stack>
              <Row><Combo $w={155} $h={19}><ComboText>General</ComboText><ComboDrop><Caret/></ComboDrop></Combo></Row>
              <Row>
                <Seg $w={93}><SegBtn $w={28}><IMoney/></SegBtn><SegBtn $w={10}><Caret/></SegBtn><SegBtn $w={27}><Glyph $s={18}>%</Glyph></SegBtn><SegBtn><Glyph $b $s={18} $lh="10px" $lift={4}>,</Glyph></SegBtn></Seg>
                <Seg $w={56} $ml={6}><SegBtn><IDec/></SegBtn><SegBtn><IDec more/></SegBtn></Seg>
              </Row>
            </Stack>
          </GroupBody>
        </Group>
        <Group $w={207}>
          <GroupHead>Format</GroupHead>
          <GroupBody $pl={7}>
            <CellCol $gap={4}>
              <IconCaret><ICond/><Caret/></IconCaret>
              <Label $center>Conditional<br/>Formatting</Label>
            </CellCol>
            <Gallery>
              <Stack $gap={5}><StyleBox $kind="normal">Normal</StyleBox><StyleBox $kind="bad">Bad</StyleBox></Stack>
              <Round><RightTri/></Round>
            </Gallery>
          </GroupBody>
        </Group>
        <Group $w={159}>
          <GroupHead>Cells</GroupHead>
          <GroupBody $pl={4}>
            <CellCol><IconCaret><IInsert/><Caret/></IconCaret><Label>Insert</Label></CellCol>
            <CellCol><IconCaret><IDelete/><Caret/></IconCaret><Label>Delete</Label></CellCol>
            <CellCol><IconCaret><IFormatCells/><Caret/></IconCaret><Label>Format</Label></CellCol>
          </GroupBody>
        </Group>
        <Group $w={24} $last><GroupHead/></Group>
      </Ribbon>
      </RibbonWrap>
      <FormulaBar>
        <NameBox>D22</NameBox>
        <Stepper><Up/><Caret $c="#333"/></Stepper>
        <FxArea><IBadgeX/><IBadgeOk/><PlusWrap><IBadgePlus/></PlusWrap><FxMark>fx</FxMark></FxArea>
      </FormulaBar>
      <Grid>
        <ColHead $c={1}><Corner/></ColHead>
        {columns.map(([n],i)=><ColHead key={n} $c={i+2} $on={n==="D"}>{n}</ColHead>)}
        {rows.map(r=><RowHead key={r} $r={r} $on={r===22}>{r}</RowHead>)}

        <Cell $c={A} $r={1} $pt={11}>ATTN:</Cell>
        <Cell $c={A} $r={2}>Robert Siegal</Cell>
        <Cell $c={A} $r={3} $pt={1}>651 California St., Palo Alto California United States 94108</Cell>
        <Quote>QUOTE</Quote>

        <Cell $c={A} $r={4} $span={4} $bg={BLUE} $color="#fff" $b $t="center" $pt={4}>Customer</Cell>
        <Cell $c={E} $r={4} $span={4} $bg="#0f243e" $color="#fff" $b $t="center" $pt={4}>Quote Detail</Cell>

        {partyRows.map(([r,a,b,c,d])=>(
          <React.Fragment key={r}>
            <Cell $c={A} $r={r} $pt={5} $b $color={BLUE} $t="right">{a}</Cell>
            <Cell $c={B} $r={r} $pt={5} $pl={3}>{b}</Cell>
            <Cell $c={C} $r={r} $pt={5} $b $color={BLUE} $t="right">{c}</Cell>
            <Cell $c={D} $r={r} $pt={5} $pl={3}>{d}</Cell>
          </React.Fragment>
        ))}
        <Cell $c={A} $r={7} $span={4} $ext $bg="#95b3d7" $color="#fff" $b $t="center" $pt={2}>Address Information</Cell>
        <Cell $c={A} $r={8} $pt={2} $b $color={BLUE} $t="right">Bill To Name</Cell>
        <Cell $c={B} $r={8} $pt={5} $pl={3}>Robert Siegal</Cell>
        <Cell $c={C} $r={8} $pt={2} $b $color={BLUE} $t="right">Ship To Name</Cell>
        <Cell $c={D} $r={8} $pt={5} $pl={3}>Robert Siegal</Cell>
        <Cell $c={A} $r={9} $pt={5} $b $color={OLIVE} $t="right">Billing Address</Cell>
        <Cell $c={B} $r={9} $pt={5} $pl={3}>651 California St., Palo Alto</Cell>
        <Cell $c={C} $r={9} $pt={5} $pr={3} $b $color={OLIVE} $t="right">Shipping Address</Cell>
        <Cell $c={D} $r={9} $pt={5} $pl={3}>651 California St., Palo Alto</Cell>

        {quoteRows.map(([r,a,b])=>(
          <React.Fragment key={r}>
            <Cell $c={E} $r={r} $pt={5} $b $color={BLUE} $t="right" $pr={4}>{a}</Cell>
            <Cell $c={F} $r={r} $pt={5} $color={GREY}>{b}</Cell>
          </React.Fragment>
        ))}
        <Cell $c={G} $r={5} $pt={5} $b $color={RED} $t="right">Expiration Date</Cell>
        <Cell $c={Hc} $r={5} $pt={5} $color={GREY} $pl={3}>2014/02/19</Cell>

        <Cell $c={A} $r={11} $span={6} $bg={BLUE} $color="#fff" $b $t="center" $pt={3}>Quote Line Items</Cell>
        <Cell $c={A} $r={12} $pt={2} $b $rule>Product Name</Cell>
        {["Unit Price","Quantity","Amount","Discount","Discounted Amount"].map((t,i)=>(
          <Cell key={t} $c={i+1} $r={12} $pt={2} $b $rule $t="right" $pr={i===4?4:3}>{t}</Cell>
        ))}
        {lineItems.map((row,ri)=>row.map((v,ci)=>(
          <Cell key={`${ri}-${ci}`} $c={ci} $r={13+ri} $pt={ci===0?6:3} $t={ci===0?"left":"right"} $pr={ci===5?4:3}>{v}</Cell>
        )))}
        {lineItems.map((_,ri)=>[1,2,3,4,5].map(ci=><Flag key={`${ri}f${ci}`} $c={ci} $r={13+ri}/>))}

        <Cell $c={A} $r={18} $span={4} $ext $bg={NAVY} $color="#fff" $b $t="center" $pt={3}>Totals</Cell>
        {totals.map(([r,l,v])=>(
          <React.Fragment key={r}>
            <Cell $c={A} $r={r} $pt={3} $b $s={14} $color={NAVY} $t="right">{l}</Cell>
            <Cell $c={B} $r={r} $pt={2} $t="right">{v}</Cell>
          </React.Fragment>
        ))}
        <Cell $c={A} $r={25} $pt={4} $b $s={14} $color={RED} $t="right">Grand total</Cell>
        <Cell $c={B} $r={25} $pt={3} $t="right">$8,132.46</Cell>
        <Selection><Handle/></Selection>
      </Grid>
    </Window>
  );
}
